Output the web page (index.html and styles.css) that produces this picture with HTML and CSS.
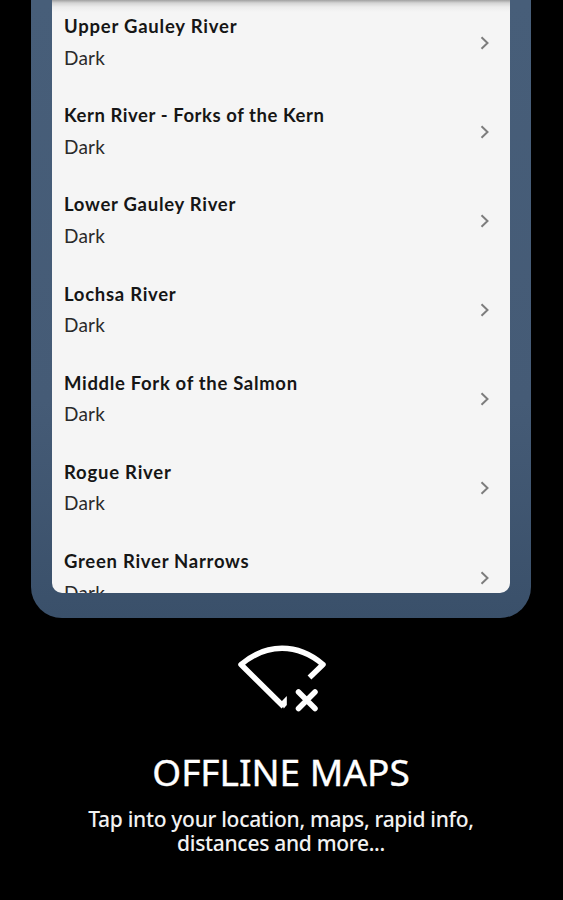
FILE: index.html
```
<!DOCTYPE html>
<html lang="en">
<head>
<meta charset="utf-8">
<title>Offline Maps</title>
<link rel="stylesheet" href="styles.css">
</head>
<body>
<main class="page">
  <section class="device">
    <ul class="screen">
      <li class="row"><div><h2 class="name upper">Upper Gauley River</h2><p class="sub">Dark</p></div><svg class="chevron" viewBox="0 0 10 14"><path d="M1.5 1.3 7.5 7l-6 5.7"/></svg></li>
      <li class="row"><div><h2 class="name kern">Kern River - Forks of the Kern</h2><p class="sub">Dark</p></div><svg class="chevron" viewBox="0 0 10 14"><path d="M1.5 1.3 7.5 7l-6 5.7"/></svg></li>
      <li class="row"><div><h2 class="name">Lower Gauley River</h2><p class="sub">Dark</p></div><svg class="chevron" viewBox="0 0 10 14"><path d="M1.5 1.3 7.5 7l-6 5.7"/></svg></li>
      <li class="row"><div><h2 class="name">Lochsa River</h2><p class="sub">Dark</p></div><svg class="chevron" viewBox="0 0 10 14"><path d="M1.5 1.3 7.5 7l-6 5.7"/></svg></li>
      <li class="row"><div><h2 class="name middle">Middle Fork of the Salmon</h2><p class="sub">Dark</p></div><svg class="chevron" viewBox="0 0 10 14"><path d="M1.5 1.3 7.5 7l-6 5.7"/></svg></li>
      <li class="row"><div><h2 class="name upper">Rogue River</h2><p class="sub">Dark</p></div><svg class="chevron" viewBox="0 0 10 14"><path d="M1.5 1.3 7.5 7l-6 5.7"/></svg></li>
      <li class="row"><div><h2 class="name">Green River Narrows</h2><p class="sub">Dark</p></div><svg class="chevron" viewBox="0 0 10 14"><path d="M1.5 1.3 7.5 7l-6 5.7"/></svg></li>
    </ul>
  </section>
  <svg class="offline" viewBox="0 0 92 70">
    <path d="M74.500 35.500 88 22.500Q69 6.300 47 6.300T6 22.500L48.500 64.500"/>
    <path class="tip" d="m46 60 5.800-6v9l-3 3.500z"/>
    <path class="cross" d="m63.500 50 16.500 16.500m0-16.500-16.500 16.500"/>
  </svg>
  <h1 class="title">OFFLINE MAPS</h1>
  <p class="caption">Tap into your location, maps, rapid info,<br>distances and more...</p>
</main>
</body>
</html>
```
FILE: styles.css
```
* { box-sizing: border-box; margin: 0; padding: 0; }
body { background: #000; overflow: hidden; }
.page {
  width: 562px;
  height: 900px;
  display: flex;
  flex-direction: column;
  align-items: center;
}
.device {
  width: 500px;
  height: 618px;
  flex: none;
  padding: 0 21px 25px;
  border-radius: 0 0 31px 31px;
  background: linear-gradient(#475e79, #455b76 65%, #3a506a);
}
.screen {
  height: 593px;
  overflow: hidden;
  list-style: none;
  border-radius: 0 0 10px 10px;
  background: linear-gradient(#a0a0a0, #d4d4d4 3px, #ececec 7px, #f5f5f5 12px);
}
.row {
  height: 89.2px;
  padding: 13px 20px 0 12px;
  display: flex;
  justify-content: space-between;
  font-family: Lato, sans-serif;
  color: #161616;
}
.name {
  font-size: 18.5px;
  font-weight: 700;
  line-height: 26px;
  letter-spacing: 0.72px;
  white-space: nowrap;
}
.upper { letter-spacing: 0.78px; }
.kern { letter-spacing: 0.56px; }
.middle { letter-spacing: 0.67px; }
.sub {
  margin-top: 5.5px;
  font-size: 19px;
  line-height: 26px;
  letter-spacing: 0.2px;
  color: #2a2a2a;
}
.chevron {
  width: 10px;
  height: 14px;
  margin-top: 22.5px;
  fill: none;
  stroke: #7d7d7d;
  stroke-width: 2;
}
.offline {
  flex: none;
  width: 92px;
  height: 70px;
  margin-top: 24px;
  fill: none;
  stroke: #fff;
  stroke-width: 5.5;
  stroke-linejoin: round;
}
.tip { fill: #fff; stroke: none; }
.cross { stroke-linecap: round; }
.title {
  margin-top: 35px;
  font: 400 37px/50px "Noto Sans", sans-serif;
  -webkit-text-stroke: 0.4px #fff;
  color: #fff;
  white-space: nowrap;
}
.caption {
  margin-top: 10px;
  font: 500 21px/24px "Noto Sans", sans-serif;
  letter-spacing: -0.3px;
  color: #f2f2f2;
  text-align: center;
  white-space: nowrap;
}
```
